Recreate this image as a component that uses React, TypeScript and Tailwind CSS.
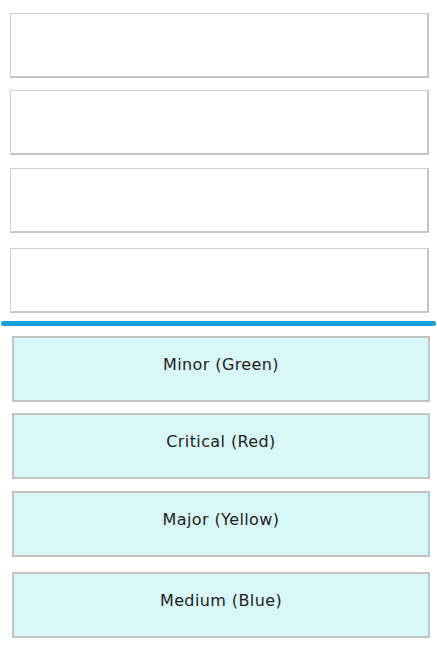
const drops = ['', '', '', ''];

const options = [
  { label: 'Minor (Green)', gap: 'mt-[10px]' },
  { label: 'Critical (Red)', gap: 'mt-[11px]' },
  { label: 'Major (Yellow)', gap: 'mt-[12px]' },
  { label: 'Medium (Blue)', gap: 'mt-[15px]' },
];

const dropGaps = ['mt-[13px]', 'mt-[12px]', 'mt-[13px]', 'mt-[15px]'];

export default function App() {
  return (
    <div
      className="w-[437px] h-[646px] bg-white overflow-hidden"
      style={{ fontFamily: '"DejaVu Sans", Verdana, sans-serif' }}
    >
      <div className="flex flex-col px-[10px]">
        {drops.map((_, i) => (
          <div
            key={i}
            className={`${dropGaps[i]} w-[419px] h-[65px] bg-white border border-[#d0d0d0] border-r-2 border-b-2 border-r-[#c4c4c4] border-b-[#c4c4c4]`}
          />
        ))}
      </div>

      <div className="mt-[8px] mx-[1px] h-[5px] rounded-full bg-[#169fd8]" />

      <div className="flex flex-col px-[12px]">
        {options.map((o) => (
          <div
            key={o.label}
            className={`${o.gap} w-[418px] h-[66px] bg-[#d8f7f8] border-2 border-[#c3c3c3] flex items-center justify-center pb-[8px] text-[16px] tracking-[0.4px] text-[#222]`}
          >
            {o.label}
          </div>
        ))}
      </div>
    </div>
  );
}
